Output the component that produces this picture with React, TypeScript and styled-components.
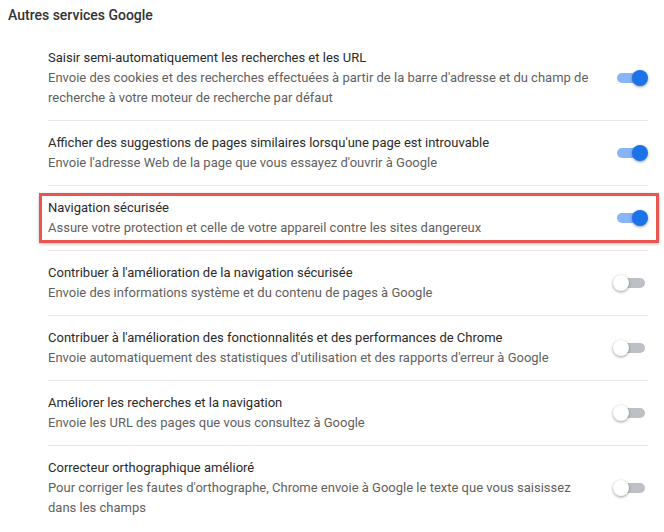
import * as React from "react"
import styled, {createGlobalStyle} from "styled-components"

type Setting = {
    title: string
    description: string
    enabled: boolean
    highlighted?: boolean
}

const settings: Setting[] = [
    {
        title: "Saisir semi-automatiquement les recherches et les URL",
        description: "Envoie des cookies et des recherches effectuées à partir de la barre d'adresse et du champ de recherche à votre moteur de recherche par défaut",
        enabled: true,
    },
    {
        title: "Afficher des suggestions de pages similaires lorsqu'une page est introuvable",
        description: "Envoie l'adresse Web de la page que vous essayez d'ouvrir à Google",
        enabled: true,
    },
    {
        title: "Navigation sécurisée",
        description: "Assure votre protection et celle de votre appareil contre les sites dangereux",
        enabled: true,
        highlighted: true,
    },
    {
        title: "Contribuer à l'amélioration de la navigation sécurisée",
        description: "Envoie des informations système et du contenu de pages à Google",
        enabled: false,
    },
    {
        title: "Contribuer à l'amélioration des fonctionnalités et des performances de Chrome",
        description: "Envoie automatiquement des statistiques d'utilisation et des rapports d'erreur à Google",
        enabled: false,
    },
    {
        title: "Améliorer les recherches et la navigation",
        description: "Envoie les URL des pages que vous consultez à Google",
        enabled: false,
    },
    {
        title: "Correcteur orthographique amélioré",
        description: "Pour corriger les fautes d'orthographe, Chrome envoie à Google le texte que vous saisissez dans les champs",
        enabled: false,
    },
]

const Toggle = ({on}: {on: boolean}) => (
    <ToggleWrapper>
        <ToggleTrack $on={on} />
        <ToggleKnob $on={on} />
    </ToggleWrapper>
)

export default function App() {
    return (
        <>
            <GlobalStyle />
            <Page>
                <SectionTitle>Autres services Google</SectionTitle>
                <List>
                    {settings.map((s) => (
                        <Row key={s.title}>
                            <TextBlock>
                                <RowTitle>{s.title}</RowTitle>
                                <RowDescription>{s.description}</RowDescription>
                            </TextBlock>
                            <Toggle on={s.enabled} />
                            {s.highlighted && <Highlight />}
                        </Row>
                    ))}
                </List>
            </Page>
        </>
    )
}

const GlobalStyle = createGlobalStyle`
  html, body {
    margin: 0;
    padding: 0;
    background: #fff;
  }
  body {
    font-family: Roboto, "Liberation Sans", sans-serif;
    -webkit-font-smoothing: antialiased;
  }
`

const Page = styled("div")`
  width: 664px;
  height: 532px;
  overflow: hidden;
  background: #fff;
`

const SectionTitle = styled("div")`
  padding: 5px 8px 11px;
  line-height: 20px;
  font-size: 14px;
  font-weight: 500;
  color: #333;
`

const List = styled("div")`
  display: flex;
  flex-direction: column;
  margin: 0 16px 0 48px;
`

const Row = styled("div")`
  position: relative;
  display: flex;
  align-items: center;
  padding: 12px 0;
  min-height: 40px;
  border-bottom: 1px solid #e8e8e8;

  &:last-child {
    border-bottom: none;
  }
`

const TextBlock = styled("div")`
  flex: 1;
  padding-right: 20px;
  font-size: 13px;
  line-height: 20px;
`

const RowTitle = styled("div")`
  color: #2a2a2a;
`

const RowDescription = styled("div")`
  color: #5f5f5f;
`

const ToggleWrapper = styled("div")`
  position: relative;
  flex: none;
  width: 35px;
  height: 16px;
`

const ToggleTrack = styled("div")<{ $on: boolean }>`
  position: absolute;
  left: 4px;
  right: 3px;
  top: 3px;
  height: 10px;
  border-radius: 5px;
  background: ${(p) => (p.$on ? "#8ab4f8" : "#bdc1c6")};
`

const ToggleKnob = styled("div")<{ $on: boolean }>`
  position: absolute;
  top: 0;
  left: ${(p) => (p.$on ? "19px" : "0")};
  width: 16px;
  height: 16px;
  border-radius: 50%;
  background: ${(p) => (p.$on ? "#1a73e8" : "#fff")};
  box-shadow: 0 1px 3px rgba(0, 0, 0, 0.4);
`

const Highlight = styled("div")`
  position: absolute;
  left: -9px;
  right: -11px;
  top: 7px;
  bottom: 7px;
  border: 3px solid #ea5550;
  box-shadow: 0 1px 3px rgba(0, 0, 0, 0.25);
  pointer-events: none;
`
